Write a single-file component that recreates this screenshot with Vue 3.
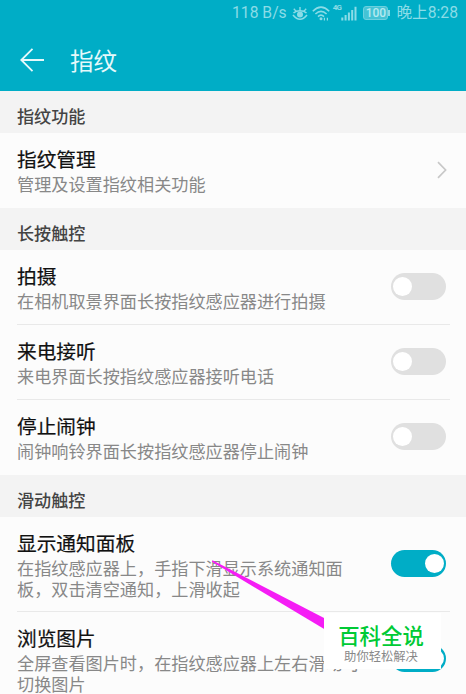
<script setup>
import { ref } from 'vue'

const groups = ref([
  {
    name: '指纹功能',
    rows: [
      { title: '指纹管理', desc: '管理及设置指纹相关功能', link: true },
    ]
  },
  {
    name: '长按触控',
    rows: [
      { title: '拍摄', desc: '在相机取景界面长按指纹感应器进行拍摄', on: false },
      { title: '来电接听', desc: '来电界面长按指纹感应器接听电话', on: false },
      { title: '停止闹钟', desc: '闹钟响铃界面长按指纹感应器停止闹钟', on: false },
    ]
  },
  {
    name: '滑动触控',
    rows: [
      { title: '显示通知面板', desc: '在指纹感应器上，手指下滑显示系统通知面板，双击清空通知，上滑收起', on: true },
      { title: '浏览图片', desc: '全屏查看图片时，在指纹感应器上左右滑动可切换图片', on: true },
    ]
  },
])
</script>

<template>
  <div class="screen">
    <header class="top">
      <div class="status">
        <span class="speed">118 B/s</span>
        <svg class="eye" viewBox="0 0 16 15" width="16" height="15">
          <path d="M1.5 7Q4 4.8 8 4.8T14.5 7M1 9Q8 17.5 15 9" fill="none" stroke="currentColor" stroke-width="1.6"/>
          <circle cx="8" cy="8.6" r="3" fill="currentColor"/>
          <path d="M8 4.8V1M4.2 5.4L1.8 2.8M11.8 5.4l2.4-2.6" stroke="currentColor" stroke-width="1.4"/>
        </svg>
        <svg class="wifi" viewBox="0 0 18 15" width="18" height="15">
          <g fill="none" stroke="currentColor" stroke-width="1.6">
            <path d="M.8 5.2Q9-2.8 17.2 5.2"/>
            <path d="M3.4 8Q9 2.6 14.6 8"/>
            <path d="M6 10.6Q9 7.8 12 10.6"/>
          </g>
          <circle cx="9" cy="12.8" r="1.5" fill="currentColor"/>
          <path d="M12.4 11.8v2.7M15.4 11.8v2.7" stroke="currentColor" stroke-width="1.2"/>
        </svg>
        <span class="net">4G</span>
        <svg class="signal" viewBox="0 0 16 15" width="16" height="15">
          <path d="M1.3 11.5v3M4.6 9v5.5M7.9 6.5v8M11.2 4v10.5M14.5.8v13.7" stroke="currentColor" stroke-width="2"/>
        </svg>
        <span class="battery">100</span>
        <span class="clock">晚上8:28</span>
      </div>
      <div class="bar">
        <svg class="back" viewBox="0 0 26 26" width="26" height="26">
          <path d="M13.5 1.8L2.3 13l11.2 11.2M2.3 13H25" fill="none" stroke="currentColor" stroke-width="1.8"/>
        </svg>
        <h1>指纹</h1>
      </div>
    </header>

    <section v-for="group in groups" :key="group.name">
      <h2>{{ group.name }}</h2>
      <div v-for="row in group.rows" :key="row.title" class="row">
        <div class="text">
          <h3>{{ row.title }}</h3>
          <p>{{ row.desc }}</p>
        </div>
        <svg v-if="row.link" class="chevron" viewBox="0 0 10 18" width="10" height="18">
          <path d="M1 1.2L8.6 9L1 16.8" fill="none" stroke="currentColor" stroke-width="1.7"/>
        </svg>
        <button v-else class="switch" :class="{ on: row.on }" :aria-label="row.title" @click="row.on = !row.on"></button>
      </div>
    </section>

    <!-- Pointer and label over the list -->
    <svg class="pointer" viewBox="0 0 114 70" width="114" height="70">
      <path d="M0 .6L1 .6L113 58.5v11L0 1.8Z" fill="#f51df5"/>
    </svg>
    <div class="badge">
      <strong>百科全说</strong>
      <span>助你轻松解决</span>
    </div>
  </div>
</template>

<style>
body { margin: 0; }
</style>

<style scoped>
*, *::after, *::before { box-sizing: border-box; margin: 0; padding: 0; }

.screen {
  position: relative;
  width: 466px; height: 694px; overflow: hidden;
  background: #fcfcfc;
  font-family: Roboto, 'Noto Sans CJK SC', sans-serif;
}

/* Header */
.top { height: 91px; background: #00adc6; color: #e5f9fb; }
.status {
  height: 26px; padding-right: 8px;
  display: flex; align-items: center; justify-content: flex-end;
  font-size: 15.7px; line-height: 26px; color: #8bdce7;
  white-space: nowrap;
}
.eye { margin-left: 5px; }
.wifi { margin-left: 4px; }
.net { align-self: flex-start; margin: 4px 0 0 3px; font-size: 8px; line-height: 8px; font-weight: 700; letter-spacing: -.7px; }
.battery {
  position: relative;
  width: 25px; height: 14px; margin: 0 8px 0 6px;
  border: 1px solid #6bd0df; border-radius: 3px; background: #45c3d5;
  font-size: 12px; line-height: 12px; font-weight: 500; text-align: center; color: #b5eaf0;
}
.battery::after {
  content: ''; position: absolute; right: -3px; top: 3px;
  width: 2px; height: 6px; background: #8bdce7;
}
.bar { display: flex; align-items: center; height: 66px; padding: 1px 0 0 19px; }
.back { display: block; }
h1 { margin-left: 25px; padding-top: 4px; font-size: 23.5px; line-height: 34px; font-weight: 400; }

/* List */
h2 {
  height: 42px; padding: 6px 17px 0;
  background: #f3f3f3; color: #444;
  font-size: 17.1px; line-height: 41px; font-weight: 500;
}
.row {
  position: relative;
  display: flex; align-items: center; justify-content: space-between;
  min-height: 75px; padding: 13px 20px 11px 17px;
}
.row + .row::before {
  content: ''; position: absolute; left: 17px; right: 16px; top: -1px;
  height: 1px; background: #e9e9e9;
}
.text { width: 346px; padding-top: 1px; }
h3 { font-size: 19.7px; line-height: 27px; font-weight: 400; color: #111; -webkit-text-stroke: .2px #111; }
p { font-size: 17.15px; line-height: 20.5px; color: #888; padding-top: 1px; margin-bottom: 1px; }
.chevron { color: #c8c8c8; margin: 0 -1px 4px 0; }
.switch {
  position: relative; flex: none;
  width: 55px; height: 27px; margin-bottom: 4px;
  border: 0; border-radius: 14px; background: #e0e0e0; cursor: pointer;
}
.switch::after {
  content: ''; position: absolute; left: 2px; top: 4px;
  width: 19px; height: 19px; border-radius: 50%; background: #fff;
}
.switch.on { background: #00adc6; }
.switch.on::after { left: 34px; }

.pointer { position: absolute; left: 212px; top: 560px; }
.badge {
  position: absolute; left: 324px; top: 613px;
  width: 117px; height: 56px; padding-top: 10px;
  display: flex; flex-direction: column; align-items: center;
  background: #fff;
}
.badge strong { margin-right: 3px; font-size: 21.4px; line-height: 27px; font-weight: 500; color: #00ca35; }
.badge span { margin-right: 3px; font-size: 12.3px; line-height: 14px; color: #888; }
</style>
